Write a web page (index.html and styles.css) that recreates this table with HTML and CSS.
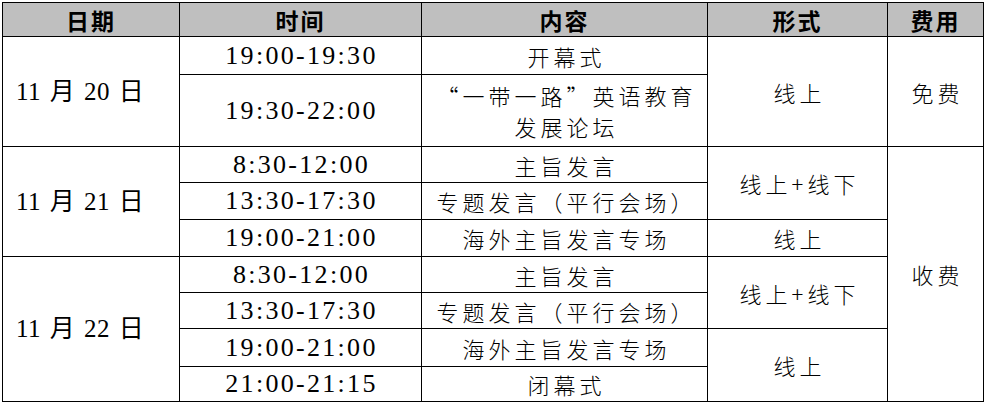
FILE: index.html
```html
<!DOCTYPE html>
<html lang="zh-CN">
<head>
<meta charset="utf-8">
<title>日程</title>
<link rel="stylesheet" href="styles.css">
</head>
<body>
<table class="schedule">
  <colgroup>
    <col class="c-date">
    <col class="c-time">
    <col class="c-content">
    <col class="c-form">
    <col class="c-fee">
  </colgroup>
  <thead>
    <tr class="h-head">
      <th>日期</th>
      <th>时间</th>
      <th>内容</th>
      <th>形式</th>
      <th>费用</th>
    </tr>
  </thead>
  <tbody>
    <tr class="h38">
      <td rowspan="2" class="date">11 月 20 日</td>
      <td class="num">19:00-19:30</td>
      <td class="zh">开幕式</td>
      <td rowspan="2" class="zh">线上</td>
      <td rowspan="2" class="zh">免费</td>
    </tr>
    <tr class="h72">
      <td class="num">19:30-22:00</td>
      <td class="zh two"><span class="q">“</span>一带一路<span class="q">”</span>英语教育<br>发展论坛</td>
    </tr>
    <tr class="h36">
      <td rowspan="3" class="date">11 月 21 日</td>
      <td class="num">8:30-12:00</td>
      <td class="zh">主旨发言</td>
      <td rowspan="2" class="zh">线上+线下</td>
      <td rowspan="7" class="zh">收费</td>
    </tr>
    <tr class="h37">
      <td class="num">13:30-17:30</td>
      <td class="zh">专题发言（平行会场）</td>
    </tr>
    <tr class="h37">
      <td class="num">19:00-21:00</td>
      <td class="zh">海外主旨发言专场</td>
      <td class="zh">线上</td>
    </tr>
    <tr class="h36">
      <td rowspan="4" class="date">11 月 22 日</td>
      <td class="num">8:30-12:00</td>
      <td class="zh">主旨发言</td>
      <td rowspan="2" class="zh">线上+线下</td>
    </tr>
    <tr class="h36">
      <td class="num">13:30-17:30</td>
      <td class="zh">专题发言（平行会场）</td>
    </tr>
    <tr class="h38">
      <td class="num">19:00-21:00</td>
      <td class="zh">海外主旨发言专场</td>
      <td rowspan="2" class="zh">线上</td>
    </tr>
    <tr class="h35">
      <td class="num">21:00-21:15</td>
      <td class="zh">闭幕式</td>
    </tr>
  </tbody>
</table>
</body>
</html>
```

FILE: styles.css
```css
html, body {
  margin: 0;
  padding: 0;
  background: #ffffff;
}
body {
  padding: 2px 0 0 2px;
}
.schedule {
  border-collapse: collapse;
  table-layout: fixed;
  width: 981px;
  font-family: "Liberation Serif", "Noto Sans CJK SC", serif;
  color: #000;
}
.c-date { width: 177px; }
.c-time { width: 242px; }
.c-content { width: 286px; }
.c-form { width: 180px; }
.c-fee { width: 96px; }

.schedule th,
.schedule td {
  border: 1px solid #000;
  padding: 0;
  text-align: center;
  vertical-align: middle;
}
.schedule th {
  background: #bfbfbf;
  font-family: "Noto Sans CJK SC", sans-serif;
  font-weight: 700;
  font-size: 23px;
  letter-spacing: 2px;
  line-height: 28px;
}
.h-head { height: 34px; }
.h35 { height: 35px; }
.h36 { height: 36px; }
.h37 { height: 37px; }
.h38 { height: 38px; }
.h72 { height: 72px; }

.schedule .num {
  font-size: 26px;
  letter-spacing: 2.3px;
  line-height: 30px;
  padding-left: 2px;
}
.schedule .date {
  text-align: left;
  padding-left: 13px;
  font-size: 25px;
  line-height: 30px;
  letter-spacing: 0.5px;
  word-spacing: 2px;
}
.schedule .zh {
  font-family: "Noto Sans CJK SC", sans-serif;
  font-weight: 300;
  font-size: 22px;
  letter-spacing: 4px;
  line-height: 30px;
  padding-left: 4px;
}
.schedule .two {
  line-height: 31px;
}
.q {
  font-family: "Noto Sans CJK SC", sans-serif;
}
```
